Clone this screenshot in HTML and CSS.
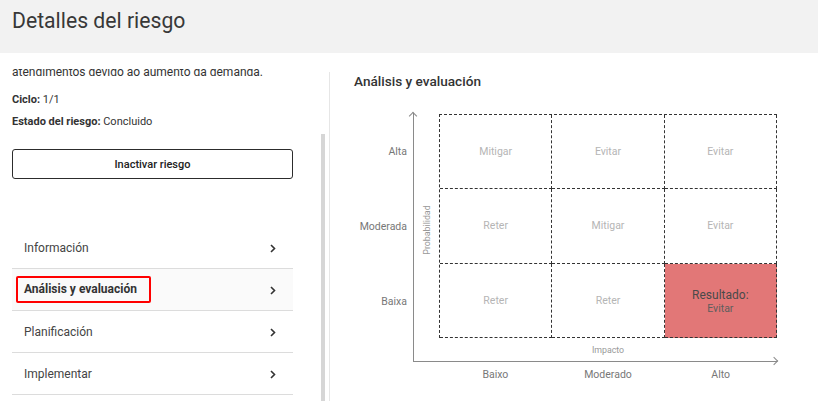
FILE: index.html
```html
<!DOCTYPE html>
<html lang="es">
<head>
<meta charset="utf-8">
<title>Detalles del riesgo</title>
<link rel="stylesheet" href="styles.css">
</head>
<body>
<header class="header">
  <h1 class="title">Detalles del riesgo</h1>
</header>
<main class="page">
  <section class="left">
    <div class="scroll">
      <div class="scroll-content">
        <p class="desc">atendimentos devido ao aumento da demanda.</p>
        <p class="meta meta-first"><b>Ciclo:</b> 1/1</p>
        <p class="meta"><b>Estado del riesgo:</b> Concluido</p>
        <button class="btn" type="button">Inactivar riesgo</button>
        <ul class="menu">
          <li class="menu-item"><span class="menu-label">Información</span><svg class="chev" width="6" height="9" viewBox="0 0 6 9"><path d="M1 1 L4.5 4.5 L1 8" fill="none" stroke="#333" stroke-width="1.6"/></svg></li>
          <li class="menu-item active"><span class="menu-label highlight">Análisis y evaluación</span><svg class="chev" width="6" height="9" viewBox="0 0 6 9"><path d="M1 1 L4.5 4.5 L1 8" fill="none" stroke="#333" stroke-width="1.6"/></svg></li>
          <li class="menu-item"><span class="menu-label">Planificación</span><svg class="chev" width="6" height="9" viewBox="0 0 6 9"><path d="M1 1 L4.5 4.5 L1 8" fill="none" stroke="#333" stroke-width="1.6"/></svg></li>
          <li class="menu-item"><span class="menu-label">Implementar</span><svg class="chev" width="6" height="9" viewBox="0 0 6 9"><path d="M1 1 L4.5 4.5 L1 8" fill="none" stroke="#333" stroke-width="1.6"/></svg></li>
        </ul>
      </div>
    </div>
    <div class="sbar"><div class="thumb"></div></div>
  </section>
  <section class="right">
    <h2 class="section-title">Análisis y evaluación</h2>
    <div class="chart">
      <div class="ylabels">
        <div class="ylabel">Alta</div>
        <div class="ylabel">Moderada</div>
        <div class="ylabel">Baixa</div>
      </div>
      <div class="plot">
        <div class="prob"><span class="prob-text">Probabilidad</span></div>
        <div class="plot-main">
          <div class="matrix">
            <div class="cell">Mitigar</div>
            <div class="cell">Evitar</div>
            <div class="cell">Evitar</div>
            <div class="cell">Reter</div>
            <div class="cell">Mitigar</div>
            <div class="cell">Evitar</div>
            <div class="cell">Reter</div>
            <div class="cell">Reter</div>
            <div class="cell result"><span class="res-title">Resultado:</span><span class="res-value">Evitar</span></div>
          </div>
          <div class="impacto">Impacto</div>
        </div>
      </div>
    </div>
    <div class="xlabels">
      <div class="xlabel">Baixo</div>
      <div class="xlabel">Moderado</div>
      <div class="xlabel">Alto</div>
    </div>
  </section>
</main>
</body>
</html>
```
FILE: styles.css
```css
* { box-sizing: border-box; }
html, body { margin: 0; padding: 0; }
body {
  font-family: Roboto, "Liberation Sans", Arial, sans-serif;
  color: #333;
  background: #fff;
  width: 818px;
  height: 401px;
  overflow: hidden;
}
.header {
  height: 53px;
  background: #f2f2f2;
  padding: 0 12px;
  display: flex;
  align-items: center;
}
.title {
  margin: 0;
  font-size: 21.2px;
  font-weight: 400;
  color: #383838;
  line-height: 24px;
  margin-top: -11px;
}
.page {
  display: flex;
  height: 348px;
  overflow: hidden;
}
.left {
  width: 329px;
  flex: none;
  display: flex;
  padding-top: 16px;
}
.scroll {
  width: 321px;
  overflow: hidden;
  height: 100%;
}
.scroll-content {
  margin-top: -6px;
  padding-left: 12px;
  width: 293px;
}
.desc {
  margin: 0;
  font-size: 12px;
  line-height: 18px;
  color: #333;
}
.meta {
  margin: 6px 0 0;
  font-size: 11px;
  line-height: 16px;
  color: #333;
}
.meta-first { margin-top: 11px; }
.meta b { font-weight: 700; }
.btn {
  display: block;
  width: 281px;
  height: 30px;
  margin-top: 19px;
  border: 1px solid #2c2c2c;
  border-radius: 3px;
  background: #fff;
  font-family: inherit;
  font-size: 11px;
  font-weight: 500;
  color: #222;
  padding: 0;
}
.menu {
  list-style: none;
  margin: 48px 0 0;
  padding: 0;
  width: 281px;
}
.menu-item {
  height: 42px;
  border-bottom: 1px solid #dcdcdc;
  display: flex;
  align-items: center;
  justify-content: space-between;
  padding: 0 17px 0 12px;
  font-size: 12px;
  color: #444;
}
.menu-item.active {
  background: #fafafa;
  font-weight: 700;
  color: #333;
}
.highlight {
  border: 2px solid #f00;
  border-radius: 2px;
  padding: 4px 12px 4px 6px;
  margin-left: -8px;
  line-height: 15px;
}
.chev { flex: none; margin-top: 1px; }
.sbar {
  width: 4px;
  flex: none;
  padding-top: 65px;
}
.thumb {
  width: 4px;
  height: 400px;
  background: #d6d6d6;
}
.right {
  flex: 1;
  margin-top: 19px;
  border-left: 1px solid #e6e6e6;
}
.section-title {
  margin: 0 0 0 24px;
  font-size: 13.6px;
  font-weight: 500;
  line-height: 18px;
  color: #333;
}
.chart {
  display: flex;
  margin-top: 23px;
}
.ylabels {
  width: 77px;
  margin-right: 6px;
  padding-top: 1px;
  display: flex;
  flex-direction: column;
}
.ylabel {
  height: 75px;
  display: flex;
  align-items: center;
  justify-content: flex-end;
  font-size: 10.5px;
  color: #777;
}
.plot {
  position: relative;
  display: flex;
  width: 364px;
  padding-top: 1px;
  border-left: 1px solid #8a8a8a;
  border-bottom: 1px solid #8a8a8a;
}
.plot::before {
  content: "";
  position: absolute;
  left: -4px;
  top: 0;
  width: 5px;
  height: 5px;
  border-left: 1px solid #8a8a8a;
  border-top: 1px solid #8a8a8a;
  transform: rotate(45deg);
  transform-origin: center;
}
.plot::after {
  content: "";
  position: absolute;
  right: 0;
  bottom: -3px;
  width: 5px;
  height: 5px;
  border-right: 1px solid #8a8a8a;
  border-top: 1px solid #8a8a8a;
  transform: rotate(45deg);
}
.prob {
  width: 25px;
  height: 224px;
  display: flex;
  align-items: center;
  justify-content: center;
  padding-top: 8px;
}
.prob-text {
  transform: rotate(-90deg);
  white-space: nowrap;
  font-size: 8.8px;
  color: #999;
}
.plot-main {
  display: flex;
  flex-direction: column;
}
.matrix {
  width: 338px;
  height: 224px;
  display: grid;
  grid-template-columns: repeat(3, 1fr);
  grid-template-rows: repeat(3, 1fr);
  border-top: 1px dashed #333;
  border-left: 1px dashed #333;
}
.cell {
  border-right: 1px dashed #333;
  border-bottom: 1px dashed #333;
  display: flex;
  flex-direction: column;
  align-items: center;
  justify-content: center;
  font-size: 10.5px;
  color: #b5b5b5;
}
.cell.result {
  background: #e27777;
  padding-top: 3px;
}
.res-title {
  font-size: 12px;
  color: #4a4a4a;
  line-height: 14px;
}
.res-value {
  font-size: 10.5px;
  color: #5e5e5e;
  line-height: 14px;
}
.impacto {
  height: 23px;
  display: flex;
  align-items: center;
  justify-content: center;
  font-size: 8.8px;
  color: #999;
}
.xlabels {
  display: flex;
  margin-left: 109px;
  width: 338px;
  padding-top: 6px;
}
.xlabel {
  flex: 1;
  text-align: center;
  font-size: 10.5px;
  line-height: 13px;
  color: #777;
}
```
